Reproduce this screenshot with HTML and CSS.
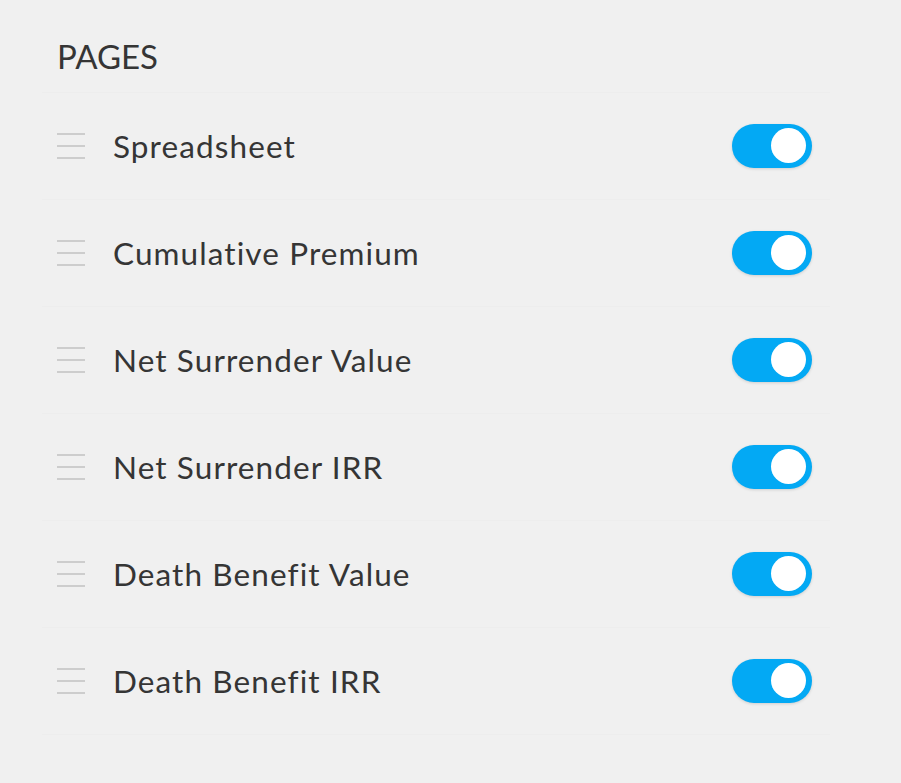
FILE: index.html
```html
<!DOCTYPE html>
<html lang="en">
<head>
    <meta charset="utf-8">
    <title>Pages</title>
    <link rel="stylesheet" href="styles.css">
</head>
<body>
    <div class="panel">
        <h2 class="title">PAGES</h2>

        <ul class="pages">
            <li class="page">
                <span class="handle"><i></i><i></i><i></i></span>
                <span class="name">Spreadsheet</span>
                <span class="switch on"><span class="knob"></span></span>
            </li>
            <li class="page">
                <span class="handle"><i></i><i></i><i></i></span>
                <span class="name">Cumulative Premium</span>
                <span class="switch on"><span class="knob"></span></span>
            </li>
            <li class="page">
                <span class="handle"><i></i><i></i><i></i></span>
                <span class="name">Net Surrender Value</span>
                <span class="switch on"><span class="knob"></span></span>
            </li>
            <li class="page">
                <span class="handle"><i></i><i></i><i></i></span>
                <span class="name">Net Surrender IRR</span>
                <span class="switch on"><span class="knob"></span></span>
            </li>
            <li class="page">
                <span class="handle"><i></i><i></i><i></i></span>
                <span class="name">Death Benefit Value</span>
                <span class="switch on"><span class="knob"></span></span>
            </li>
            <li class="page">
                <span class="handle"><i></i><i></i><i></i></span>
                <span class="name">Death Benefit IRR</span>
                <span class="switch on"><span class="knob"></span></span>
            </li>
        </ul>
    </div>
</body>
</html>
```

FILE: styles.css
```css
body { margin: 0; background: #f0f0f0; font-family: Lato, "Open Sans", sans-serif; color: #353535; }
.panel { padding: 36px 0 0 42px; width: 788px; }
.title { margin: 0 0 0 15px; font-size: 33px; font-weight: 400; line-height: 40px; height: 56px; letter-spacing: 0; }
.pages { list-style: none; margin: 0; padding: 0; border-top: 1px solid #ededed; }
.page { display: flex; align-items: center; height: 106px; padding: 0 18px 0 15px; border-bottom: 1px solid #ededed; }
.handle { display: flex; flex-direction: column; gap: 10px; width: 28px; margin-right: 28px; }
.handle i { display: block; height: 2px; background: #cdcdcd; }
.name { flex: 1; font-size: 31.5px; letter-spacing: 1.1px; }
.switch { position: relative; width: 80px; height: 44px; border-radius: 22px; background: #d0d0d0; box-shadow: 0 1px 3px rgba(0,0,0,0.14); }
.switch.on { background: #03a9f4; }
.knob { position: absolute; top: 4px; left: 5px; width: 35px; height: 35px; border-radius: 50%; background: white; }
.switch.on .knob { left: auto; right: 6px; }
```
